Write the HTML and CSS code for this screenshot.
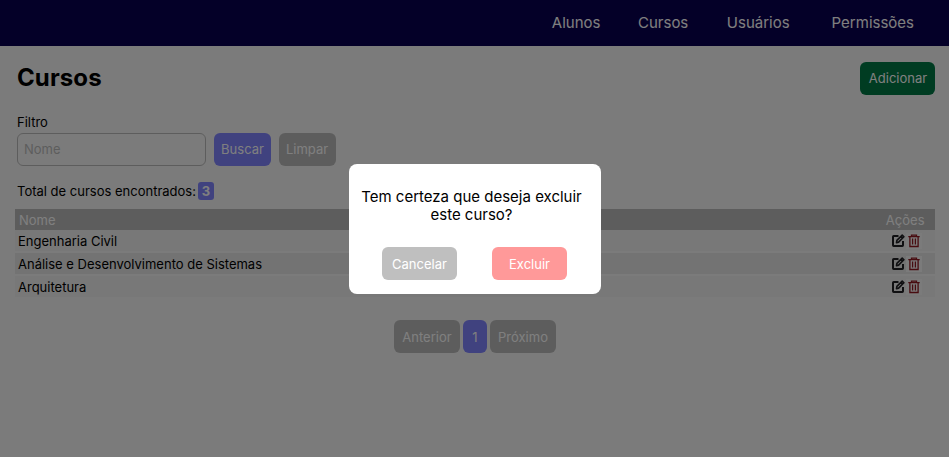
FILE: index.html
```html
<!DOCTYPE html>
<html lang="pt-BR">
<head>
<meta charset="utf-8">
<title>Cursos</title>
<link rel="stylesheet" href="styles.css">
</head>
<body>
<svg width="0" height="0" class="sprite">
  <symbol id="edit" viewBox="0 0 13 13"><path d="M6.500 2H1.700q-.7 0-.7.7v8.600q0 .7.700.7h8.600q.7 0 .7-.7V7" fill="none" stroke="currentColor" stroke-width="2"/><path d="M4.500 8.600l.4-2.200 5.300-5.300 1.700 1.700-5.300 5.300zM8.900 2.400l1.700 1.700" fill="none" stroke="currentColor" stroke-width="1.600" stroke-linejoin="round"/></symbol>
  <symbol id="trash" viewBox="0 0 12 14"><path d="M.3 2.600h11.400M3.500 2.500V1.200h5v1.300M1.900 2.500v10h8.200v-10M4.600 4.600v6M7.400 4.600v6" fill="none" stroke="currentColor" stroke-width="1.300"/></symbol>
</svg>
<header class="topbar">
  <nav class="nav"><a>Alunos</a><a>Cursos</a><a>Usuários</a><a>Permissões</a></nav>
</header>
<main class="page">
  <div class="heading"><h1>Cursos</h1><button class="btn add">Adicionar</button></div>
  <label class="label" for="nome">Filtro</label>
  <form class="filter">
    <input id="nome" placeholder="Nome">
    <button type="button" class="btn primary search">Buscar</button>
    <button type="button" class="btn muted search">Limpar</button>
  </form>
  <p class="total">Total de cursos encontrados: <b>3</b></p>
  <div class="table">
    <div class="row head"><span>Nome</span><span>Ações</span></div>
    <div class="row"><span>Engenharia Civil</span><span class="actions"><svg class="edit"><use href="#edit"/></svg><i><svg class="trash"><use href="#trash"/></svg></i></span></div>
    <div class="row even"><span>Análise e Desenvolvimento de Sistemas</span><span class="actions"><svg class="edit"><use href="#edit"/></svg><i><svg class="trash"><use href="#trash"/></svg></i></span></div>
    <div class="row"><span>Arquitetura</span><span class="actions"><svg class="edit"><use href="#edit"/></svg><i><svg class="trash"><use href="#trash"/></svg></i></span></div>
  </div>
  <div class="pager"><button class="btn muted step">Anterior</button><button class="btn primary current">1</button><button class="btn muted step">Próximo</button></div>
</main>
<div class="overlay">
  <section class="dialog">
    <p>Tem certeza que deseja excluir este curso?</p>
    <div class="choices"><button class="btn cancel">Cancelar</button><button class="btn danger">Excluir</button></div>
  </section>
</div>
</body>
</html>
```
FILE: styles.css
```css
* { box-sizing: border-box; }
body { margin: 0; height: 457px; overflow: hidden; background: #f7f7f7; color: #000; font: 13px/16px Inter, sans-serif; }
h1, p { margin: 0; }
.sprite { position: absolute; }
.topbar { height: 46px; background: #090050; color: #fff; display: flex; justify-content: flex-end; padding-right: 35px; }
.nav { display: flex; align-items: center; font-size: 15px; }
.nav a + a { margin-left: 37.5px; }
.nav a:nth-child(3) { margin-left: 38.5px; }
.nav a:nth-child(4) { margin-left: 42px; }
.page { padding: 16px 14px 0 15px; }
.btn { height: 33px; padding: 0; border: 0; border-radius: 6px; color: #fff; font: 13px Inter, sans-serif; }
.heading { display: flex; justify-content: space-between; height: 52px; padding-left: 2px; }
h1 { font-size: 24px; line-height: 32px; letter-spacing: .1px; }
.add { width: 75px; background: #007845; padding: 0 0 1px 1px; }
.label { display: block; margin-left: 2px; height: 19px; }
.filter { display: flex; gap: 8px; margin-left: 2px; }
input { width: 189px; height: 33px; padding: 0 6px 1px; border: 1px solid #bbb; border-radius: 6px; background: transparent; font: 13px Inter, sans-serif; }
input::placeholder { color: #bbb; opacity: 1; }
.primary { background: #8084ff; }
.muted { background: #bbb; }
.search { width: 57px; padding: 0 1px 1px 0; }
.search.primary { padding-right: 0; }
.total { display: flex; align-items: center; gap: 2px; height: 18px; margin: 16px 0 9px 2px; }
.total b { width: 16px; height: 18px; border-radius: 3px; background: #8084ff; color: #fff; text-align: center; line-height: 18px; }
.table { display: flex; flex-direction: column; gap: 2px; }
.row { display: flex; justify-content: space-between; align-items: center; height: 21px; padding: 0 11px 0 3px; background: #f0f0f0; }
.row.even { background: #e7e7e7; }
.row.head { background: #bbb; color: #fff; padding-left: 4px; padding-right: 10.5px; margin-bottom: -2px; }
.actions { display: flex; align-items: center; gap: 1px; margin-right: 2px; }
.actions i { display: grid; place-items: center; width: 16px; height: 16px; background: #f7f7f7; }
.edit { width: 13px; height: 13px; color: #202024; overflow: visible; }
.trash { width: 12px; height: 14px; color: #901820; }
.pager { display: flex; justify-content: center; gap: 3px; margin-top: 23px; }
.step { width: 66px; }
.current { width: 24px; }
.overlay { position: fixed; inset: 0; background: rgba(0, 0, 0, .5); }
.dialog { position: absolute; left: 349px; top: 164px; width: 252px; height: 130px; padding: 24px 16px 14px 9px; border-radius: 8px; background: #fff; }
.dialog p { font-size: 15px; line-height: 18px; text-align: center; }
.choices { display: flex; gap: 35px; margin: 23px 0 0 24px; }
.choices .btn { width: 75px; flex: none; }
.cancel { background: #bfbfbf; }
.danger { background: #ff9999; }
```
